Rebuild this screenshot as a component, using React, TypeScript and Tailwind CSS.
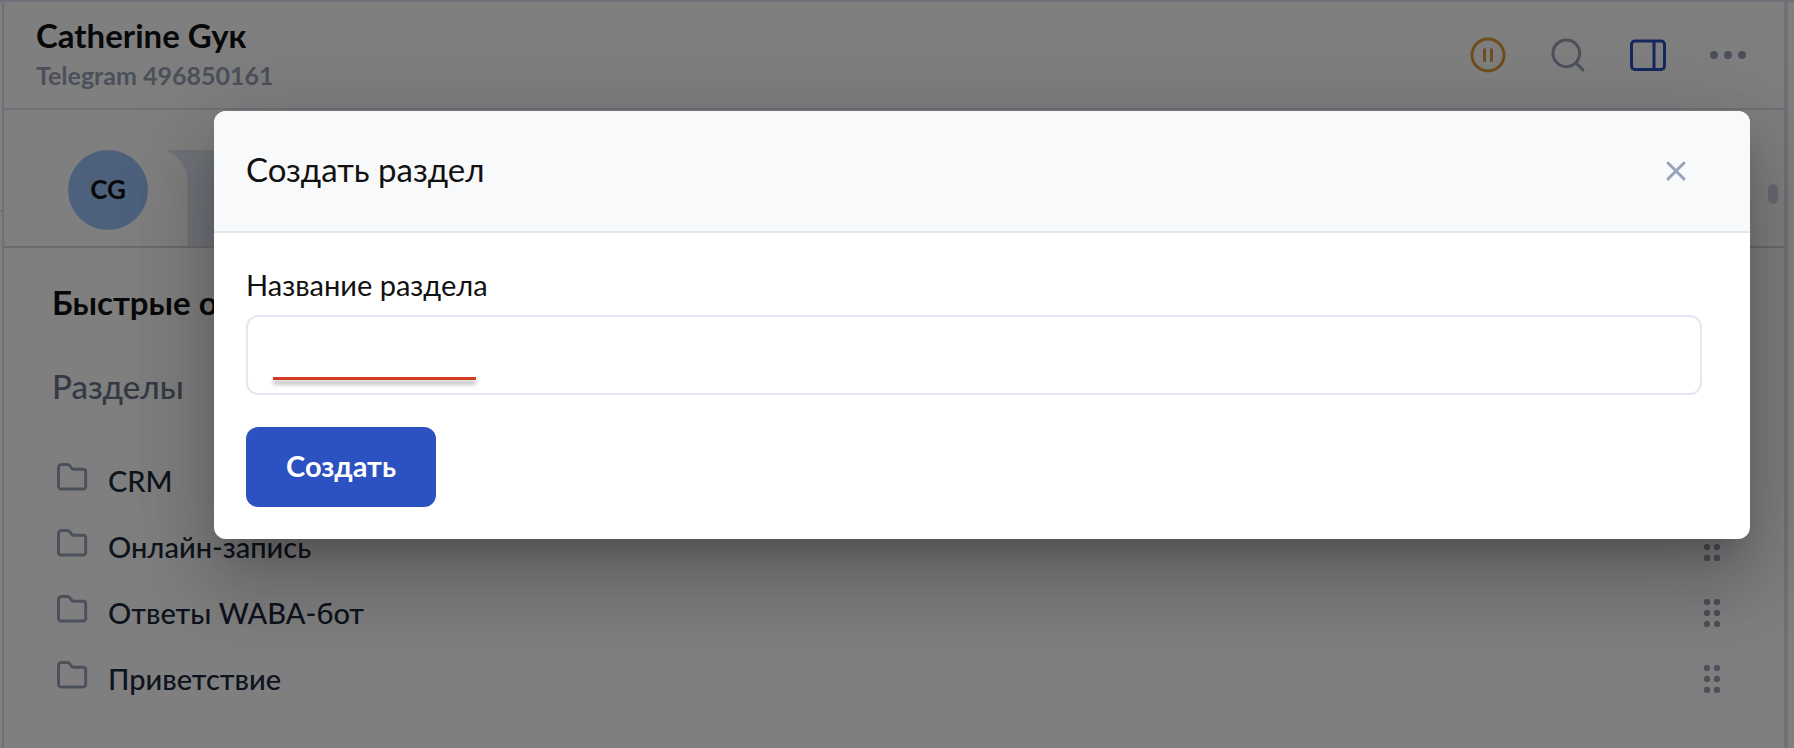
import React from 'react';
import { Search, X } from 'lucide-react';

const folders = ['CRM', 'Онлайн-запись', 'Ответы WABA-бот', 'Приветствие'];

const PauseIcon = () => (
  <svg className="size-9" viewBox="0 0 36 36" fill="none" stroke="currentColor" strokeWidth="3" strokeLinecap="round">
    <circle cx="18" cy="18" r="16" />
    <path d="M14.5 12.5v11M21.5 12.5v11" />
  </svg>
);

const SidebarIcon = () => (
  <svg className="size-9" viewBox="0 0 36 36" fill="none" stroke="currentColor" strokeWidth="3" strokeLinejoin="round">
    <rect x="1.5" y="4" width="33" height="28.5" rx="3.5" />
    <path d="M24 4v28.5" />
  </svg>
);

const DotsIcon = () => (
  <svg className="size-9" viewBox="0 0 36 36" fill="currentColor">
    <circle cx="4" cy="18" r="4" />
    <circle cx="18" cy="18" r="4" />
    <circle cx="32" cy="18" r="4" />
  </svg>
);

const FolderIcon = () => (
  <svg className="h-7 w-8" viewBox="0 0 32 28" fill="none" stroke="currentColor" strokeWidth="3" strokeLinejoin="round">
    <path d="M2.5 4.5a3 3 0 0 1 3-3h5.8a3 3 0 0 1 2.4 1.2l1.6 2.2a3 3 0 0 0 2.4 1.3h9.5a2.5 2.5 0 0 1 2.5 2.5v14.8a2.5 2.5 0 0 1-2.5 2.5h-22.2a2.5 2.5 0 0 1-2.5-2.5z" />
  </svg>
);

const GripIcon = () => (
  <svg className="h-7 w-4" viewBox="0 0 16 28" fill="currentColor">
    <circle cx="3" cy="3" r="3.2" />
    <circle cx="13" cy="3" r="3.2" />
    <circle cx="3" cy="14" r="3.2" />
    <circle cx="13" cy="14" r="3.2" />
    <circle cx="3" cy="25" r="3.2" />
    <circle cx="13" cy="25" r="3.2" />
  </svg>
);

const ChatHeader = () => (
  <header className="flex items-center justify-between border-b-2 border-[#e0e2f0] h-[108px] pl-8 pr-[38px]">
    <div>
      <h1 className="text-[33px] leading-10 font-bold text-[#111]">Catherine Gyк</h1>
      <p className="text-[25px] leading-10 font-bold text-[#98a1b4]">Telegram 496850161</p>
    </div>
    <div className="flex items-center gap-11 text-[#98a1b4]">
      <button aria-label="Пауза" className="text-[#e09a38]">
        <PauseIcon />
      </button>
      <button aria-label="Поиск">
        <Search className="size-10 -mx-0.5" strokeWidth={1.8} />
      </button>
      <button aria-label="Боковая панель" className="text-[#2b52c0]">
        <SidebarIcon />
      </button>
      <button aria-label="Ещё">
        <DotsIcon />
      </button>
    </div>
  </header>
);

const ChatMessages = () => (
  <section className="flex h-[138px] border-b-2 border-[#d4d4d4] pt-10 pl-16 pr-1.5">
    <div className="flex size-20 shrink-0 items-center justify-center rounded-full bg-[#9bc3f8] pb-0.5 text-[26px] font-bold text-[#111]">
      CG
    </div>
    <svg className="ml-4 h-24 w-6 shrink-0 text-[#e2e6f4]" viewBox="0 0 24 96" fill="currentColor">
      <path d="M2 0h22v96h-0.5V26C22 16 14 5 2 0z" />
    </svg>
    <div className="grow bg-[#e2e6f4] mr-10" />
    <div className="mt-[34px] h-5 w-2.5 rounded-full bg-[#d3d7e2]" />
  </section>
);

const QuickReplies = () => (
  <section className="px-12 pt-[30px]">
    <h2 className="text-[33px] leading-12 font-bold text-[#111]">Быстрые о</h2>
    <h3 className="mt-9 text-[33px] leading-12 font-medium text-[#6a738b]">Разделы</h3>
    <ul className="mt-[38px]">
      {folders.map((name) => (
        <li key={name} className="flex h-[66px] items-center justify-between pl-1 pr-4">
          <a href="#" className="flex items-center gap-5 text-[29px] font-medium text-slate-800">
            <span className="mb-2 text-[#98a1b4]">
              <FolderIcon />
            </span>
            {name}
          </a>
          <button aria-label="Переместить" className="text-[#98a1b4]">
            <GripIcon />
          </button>
        </li>
      ))}
    </ul>
  </section>
);

const CreateSectionDialog = () => (
  <div
    role="dialog"
    aria-labelledby="dialog-title"
    className="w-full overflow-hidden rounded-xl bg-white text-[#111] shadow-[0_22px_30px_-14px_rgba(0,0,0,0.2),0_48px_76px_6px_rgba(0,0,0,0.14),0_18px_92px_16px_rgba(0,0,0,0.12)]"
  >
    <div className="flex h-[122px] items-center justify-between border-b-2 border-slate-200 bg-[#f8f9fb] pl-8 pr-[58px]">
      <h2 id="dialog-title" className="pb-1 text-[33px] leading-10">Создать раздел</h2>
      <button aria-label="Закрыть" className="text-[#98a3ba]">
        <X className="size-8" strokeWidth={2.2} />
      </button>
    </div>
    <form className="pt-8 pb-8 pl-8 pr-12" onSubmit={(e) => e.preventDefault()}>
      <label htmlFor="section-name" className="block text-[29px] leading-10">
        Название раздела
      </label>
      <div className="relative mt-2.5">
        <input
          id="section-name"
          type="text"
          className="block h-20 w-full rounded-xl border-2 border-slate-200 px-6 text-[29px] outline-none"
        />
        {/* Underline marker inside the field */}
        <span className="pointer-events-none absolute bottom-[15px] left-[27px] h-[3px] w-[203px] bg-[#d33a22] shadow-[0_4px_4px_rgba(0,0,0,0.35)]" />
      </div>
      <button type="submit" className="mt-8 h-20 rounded-xl bg-[#2b52c0] px-10 pb-0.5 text-[29px] font-bold text-white">
        Создать
      </button>
    </form>
  </div>
);

const App = () => {
  return (
    <div className="relative min-h-screen overflow-hidden bg-white font-['Lato','Noto_Sans',sans-serif]">
      <div className="flex min-h-screen border-t-2 border-[#e0e2f0]">
        <div className="w-0.5 shrink-0 pt-[208px]">
          <div className="h-0.5 bg-[#e0e2f0]" />
        </div>
        <main className="min-w-0 grow border-l-2 border-r-4 border-[#e0e2f0]">
          <ChatHeader />
          <ChatMessages />
          <QuickReplies />
        </main>
        <div className="w-1.5 shrink-0" />
      </div>

      {/* Modal overlay */}
      <div className="absolute inset-0 bg-black/50 pt-[111px] pl-[214px] pr-11">
        <CreateSectionDialog />
      </div>
    </div>
  );
};

export default App;
